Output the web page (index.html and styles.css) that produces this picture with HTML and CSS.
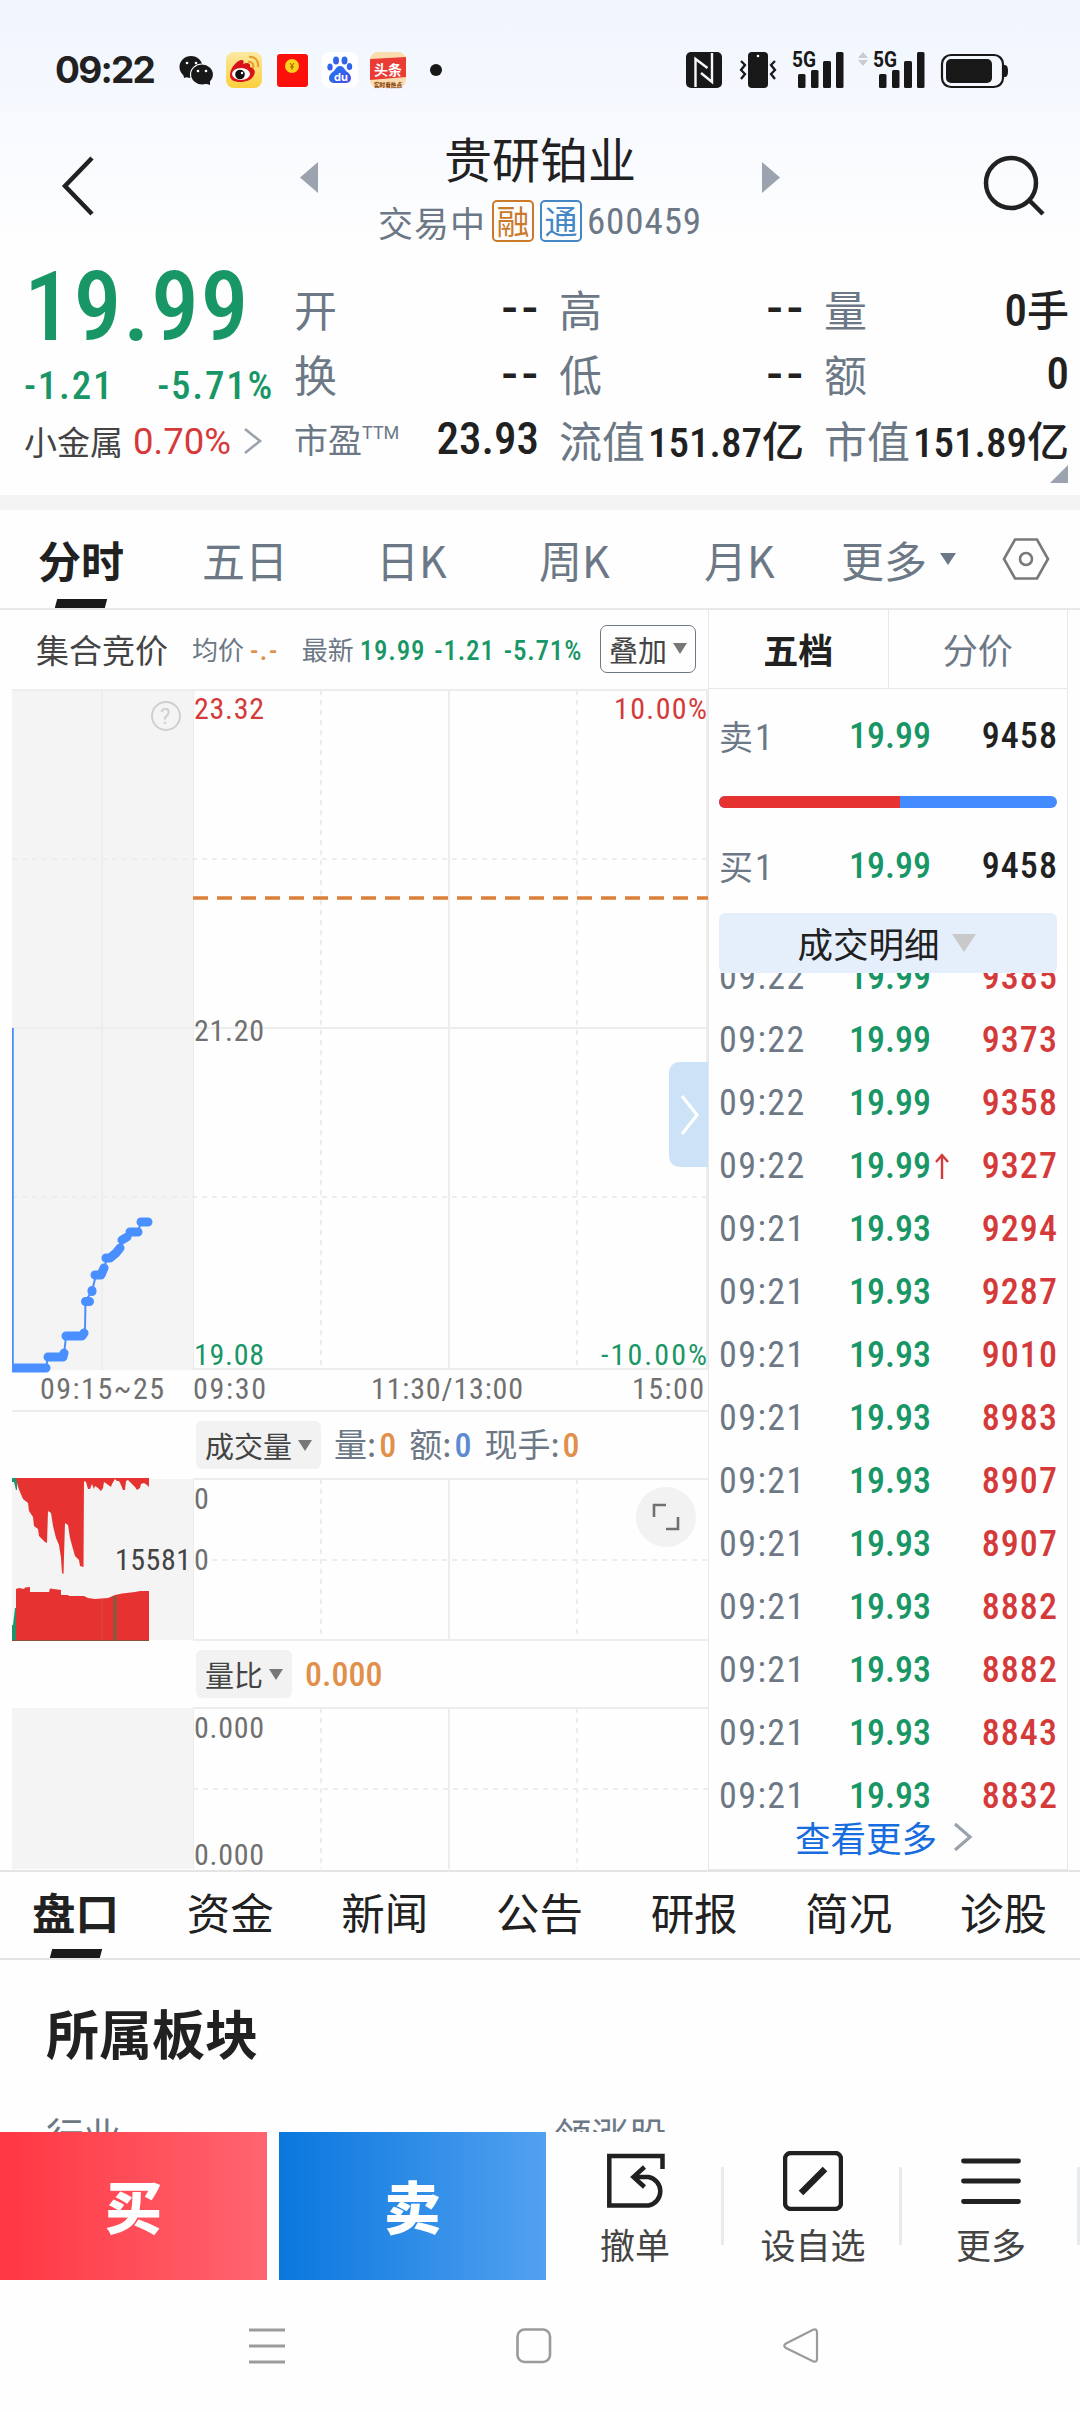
FILE: index.html
```html
<!DOCTYPE html>
<html lang="zh-CN">
<head>
<meta charset="utf-8">
<title>贵研铂业 600459</title>
<link rel="stylesheet" href="styles.css">
</head>
<body>
<div class="app">
  <header class="top">
    <div class="status">
      <span class="clock">09:22</span>
      <svg class="status-apps" width="270" height="44" viewBox="176 49 270 44">
        <ellipse cx="191" cy="68" rx="11.500" ry="11" fill="#181818"/><path d="M183 74l1 5 6-2z" fill="#181818"/>
        <ellipse cx="202" cy="75.500" rx="11.500" ry="10.500" fill="#181818" stroke="#f4f8fe" stroke-width="1.200"/><path d="M210 81l0 5-6-2z" fill="#181818"/>
        <circle cx="187" cy="64" r="1.300" fill="#fff"/><circle cx="196" cy="64" r="1.300" fill="#fff"/><circle cx="198" cy="72" r="1.300" fill="#fff"/><circle cx="206" cy="72" r="1.300" fill="#fff"/>
        <defs><linearGradient id="wb" x1="0" y1="0" x2="0" y2="1"><stop offset="0" stop-color="#fbe9a3"/><stop offset="1" stop-color="#fbcf3c"/></linearGradient>
        <linearGradient id="bd" x1="0" y1="0" x2="1" y2="1"><stop offset="0" stop-color="#1a7cf0"/><stop offset="1" stop-color="#4a4be8"/></linearGradient></defs>
        <rect x="226" y="53" width="36" height="36" rx="8" fill="url(#wb)"/>
        <path d="M230 76c0-7 7-15 12-15 2 0 2 2 1 4 4-2 8-1 7 3 4 1 6 4 4 8-2 5-8 7-14 7s-10-2-10-7z" fill="#d7141a"/>
        <ellipse cx="241" cy="75" rx="9" ry="6" fill="#fff"/><circle cx="240" cy="75.500" r="4.800" fill="#111"/><circle cx="242" cy="74" r="1.200" fill="#fff"/>
        <path d="M248 63c4-1 6 2 5 6M249 58c6-1 10 4 9 10" fill="none" stroke="#e8a02a" stroke-width="2.200"/>
        <rect x="275" y="53" width="34" height="36" rx="8" fill="#fff"/><rect x="277" y="55" width="31" height="33" rx="3" fill="#fb100c"/><circle cx="292" cy="67" r="7" fill="#fbd21c"/><path d="M290 64l2 3 2-3M292 67v4M290 68h4" stroke="#9a5a08" fill="none"/>
        <rect x="322" y="53" width="36" height="36" rx="8" fill="#fff"/>
        <g fill="url(#bd)"><ellipse cx="336" cy="61.500" rx="3" ry="4"/><ellipse cx="344.500" cy="61.500" rx="3" ry="4"/><ellipse cx="330" cy="68" rx="2.700" ry="3.600"/><ellipse cx="349.500" cy="67.500" rx="2.700" ry="3.600"/><path d="M340 67c3 0 4 2 6 5 3 2 5 4 5 7 0 4-3 5-6 5h-10c-4 0-6-2-6-5s2-5 5-7c2-3 3-5 6-5z"/></g>
        <text x="334" y="82" font-family="Inter, sans-serif" font-weight="700" font-size="11" fill="#fff">du</text>
        <rect x="370" y="53" width="36" height="36" rx="8" fill="#fbdcae"/><path d="M370 60l36-2v20l-36 3z" fill="#ea3c35"/>
        <text x="374" y="76" font-family="Noto Sans CJK SC, sans-serif" font-weight="700" font-size="14" fill="#fff">头条</text>
        <text x="374" y="88" font-family="Noto Sans CJK SC, sans-serif" font-weight="900" font-size="5.600" fill="#8c4a18">实时看热点</text>
        <circle cx="436" cy="71" r="6" fill="#181818"/>
      </svg>
      <svg class="status-sys" width="326" height="44" viewBox="684 48 326 44" fill="#181818">
        <rect x="686" y="52" width="36" height="36" rx="5"/><path d="M695.500 87V59l12 9M712 53v29l-11-9" fill="none" stroke="#f4f8fe" stroke-width="2.400"/>
        <rect x="748" y="52" width="20" height="36" rx="4"/><circle cx="758" cy="56" r="1.300" fill="#fff"/>
        <path d="M741 61l4 4-4 5 4 4-4 5M775 61l-4 4 4 5-4 4 4 5" fill="none" stroke="#181818" stroke-width="2.300"/>
        <text x="792" y="67" textLength="24" lengthAdjust="spacingAndGlyphs" font-family="Roboto, sans-serif" font-weight="700" font-size="22">5G</text>
        <rect x="798" y="74" width="7.500" height="14" rx="1.500"/><rect x="811" y="70" width="7.500" height="18" rx="1.500"/><rect x="823" y="61" width="8" height="27" rx="1.500"/><rect x="836" y="52" width="7.500" height="36" rx="1.500"/>
        <path d="M858 58l5-6 5 6zM858 60l5 6 5-6z" fill="#c9ccd2"/>
        <text x="873" y="67" textLength="24" lengthAdjust="spacingAndGlyphs" font-family="Roboto, sans-serif" font-weight="700" font-size="22">5G</text>
        <rect x="879" y="74" width="7.500" height="14" rx="1.500"/><rect x="892" y="70" width="7.500" height="18" rx="1.500"/><rect x="904" y="61" width="8" height="27" rx="1.500"/><rect x="917" y="52" width="7.500" height="36" rx="1.500"/>
        <rect x="942" y="55" width="61" height="32" rx="9" fill="none" stroke="#181818" stroke-width="2.200"/><rect x="946" y="59" width="46" height="24" rx="5"/><path d="M1003 65h2q3 0 3 6t-3 6h-2z"/>
      </svg>
    </div>
    <div class="titlebar">
      <svg width="34" height="60" viewBox="0 0 34 60"><path d="M32 2L5 30l27 28" fill="none" stroke="#212121" stroke-width="4.500"/></svg>
      <svg class="prev" width="18" height="31" viewBox="0 0 18 31"><path d="M18 0v31L0 15.500z" fill="#9ba3ae"/></svg>
      <div class="titles">
        <h1 class="name">贵研铂业</h1>
        <div class="sub"><span>交易中</span><span class="tag tag-orange">融</span><span class="tag tag-blue">通</span><span class="num code">600459</span></div>
      </div>
      <svg class="next" width="18" height="31" viewBox="0 0 18 31"><path d="M0 0v31l18-15.500z" fill="#9ba3ae"/></svg>
      <svg class="search" width="64" height="64" viewBox="0 0 64 64"><g fill="none" stroke="#212121" stroke-width="4.500"><circle cx="29" cy="30" r="25"/><path d="M47 47l14 14"/></g></svg>
    </div>
  </header>

  <section class="quote">
    <div class="last">
      <div class="price num green">19.99</div>
      <div class="change num green"><span>-1.21</span><span>-5.71%</span></div>
      <div class="sector"><span>小金属</span><span class="red pct">0.70%</span><svg width="20" height="28" viewBox="0 0 20 28"><path d="M2 2l15 12L2 26" fill="none" stroke="#9aa2ac" stroke-width="2.600"/></svg></div>
    </div>
    <div class="stats">
      <div class="stat"><span class="lab">开</span><b class="dash">--</b></div>
      <div class="stat"><span class="lab">高</span><b class="dash">--</b></div>
      <div class="stat"><span class="lab">量</span><b class="num">0<i>手</i></b></div>
      <div class="stat"><span class="lab">换</span><b class="dash">--</b></div>
      <div class="stat"><span class="lab">低</span><b class="dash">--</b></div>
      <div class="stat"><span class="lab">额</span><b class="num">0</b></div>
      <div class="stat"><span class="lab small">市盈<sup>TTM</sup></span><b class="num">23.93</b></div>
      <div class="stat"><span class="lab">流值</span><b class="num fit">151.87<i>亿</i></b></div>
      <div class="stat"><span class="lab">市值</span><b class="num fit">151.89<i>亿</i></b></div>
    </div>
    <svg class="corner" width="18" height="18" viewBox="0 0 18 18"><path d="M18 0v18H0z" fill="#9ba3ae"/></svg>
  </section>

  <nav class="periods">
    <span class="period active">分时</span><span class="period">五日</span><span class="period">日K</span><span class="period">周K</span><span class="period">月K</span>
    <span class="period more">更多<svg width="16" height="12" viewBox="0 0 16 12"><path d="M0 0h16L8 12z" fill="#6c7885"/></svg></span>
    <svg width="48" height="42" viewBox="0 0 48 42"><g fill="none" stroke="#77797c" stroke-width="2.600"><path d="M2 21L13 1.500h22L46 21 35 40.500H13z"/><circle cx="24" cy="21" r="6"/></g></svg>
  </nav>

  <main class="market">
    <div class="charts">
      <div class="legend">
        <span class="call">集合竞价</span>
        <span class="avg">均价<b class="num orange">-.-</b></span>
        <span class="now">最新<b class="num green">19.99</b><b class="num green">-1.21</b><b class="num green">-5.71%</b></span>
        <span class="chip outline">叠加<svg width="14" height="11" viewBox="0 0 14 11"><path d="M0 0h14L7 11z" fill="#777"/></svg></span>
      </div>
      <svg class="plot" width="697" height="723" viewBox="12 689 697 723">
        <rect x="12" y="690" width="181" height="680" fill="#f4f4f4"/>
        <g stroke="#ededee" stroke-width="2" fill="none">
          <path d="M12 690h696M12 1028h696M193 1369h515M102 690v680M449 690v680M707 690v680M12 1411h696"/>
          <path d="M193.500 690v680" stroke-width="1"/>
          <path d="M321 690v680M577 690v680" stroke-dasharray="5 5"/>
          <path d="M12 859h696M12 1197h696" stroke-dasharray="5 5"/>
        </g>
        <path d="M193 898h515" stroke="#dc7f38" stroke-width="3.500" stroke-dasharray="15 9"/>
        <circle cx="166" cy="716" r="14" fill="none" stroke="#cfcfcf" stroke-width="2"/>
        <text class="q" x="160" y="724">?</text>
        <path d="M12.800 1028V1368H46L48 1357L64 1355L66 1336H82L85 1330L85.500 1301L92 1291L96 1275L101 1273L108 1258L120 1247L124 1239L131 1232L138 1230L142 1222H148" fill="none" stroke="#4a8fff" stroke-width="2"/>
        <path d="M12 1368H46M48 1357H63L64 1353M66 1336H82L84 1333M85.500 1301.500H89.500M92 1291.500V1290.500M95 1275H101L104 1268M106 1258H110L116 1253L120 1248M122 1240L127 1237M130 1232H138M141 1222H148" fill="none" stroke="#4a8fff" stroke-width="9" stroke-linecap="round" stroke-linejoin="round"/>
        <g class="axis">
          <text class="up" x="194" y="719" textLength="70">23.32</text><text class="up" x="614" y="719" textLength="93">10.00%</text>
          <text x="194" y="1041" textLength="70">21.20</text>
          <text class="down" x="194" y="1365" textLength="70">19.08</text><text class="down" x="601" y="1365" textLength="106">-10.00%</text>
          <text x="40" y="1399" textLength="124">09:15~25</text><text x="193" y="1399" textLength="73">09:30</text><text x="371" y="1399" textLength="152">11:30/13:00</text><text x="632" y="1399" textLength="72">15:00</text>
        </g>
        <path d="M708 1062h-27q-12 0-12 12v81q0 12 12 12h27z" fill="#cce2f7"/><path d="M682 1096l15 19-15 19" fill="none" stroke="#fff" stroke-width="3.200"/>
      </svg>
      <div class="indicator">
        <span class="chip">成交量<svg width="14" height="11" viewBox="0 0 14 11"><path d="M0 0h14L7 11z" fill="#777"/></svg></span>
        <span class="ind">量:<b class="num orange">0</b></span><span class="ind">额:<b class="num blue">0</b></span><span class="ind">现手:<b class="num orange">0</b></span>
      </div>
      <svg class="plot" width="697" height="163" viewBox="12 1478 697 163">
        <rect x="12" y="1479" width="181" height="161" fill="#f4f4f4"/>
        <g stroke="#ededee" stroke-width="2" fill="none"><path d="M193 1479h515M193 1640h515M449 1479v161"/><path d="M193.500 1479v161" stroke-width="1"/><path d="M321 1479v161M577 1479v161M212 1560h496" stroke-dasharray="5 5"/></g>
        <path d="M12 1478h5v12h-1l-2-8h-2z" fill="#1f9468"/>
        <path d="M16 1478H149V1487L147 1485 144 1483 141 1484 140 1488 137 1490 135 1487 131 1483 128 1480 126 1481 125 1490 123 1490 121 1485 119 1481 117 1481 115 1479 112 1484 111 1487 107 1484 104 1482 103 1488 101 1491 98 1488 95 1486 94 1489 92 1484 90 1489 88 1489 86 1482 84 1481 83.500 1567 80 1566 79 1560 75 1556 73 1549 70 1538 68 1525 65 1523 63.500 1574 62 1573 61 1558 59 1545 56 1538 53 1526 51 1513 48 1511 47 1543 45 1542 39 1536 38 1529 34 1526 33 1517 29 1511 28 1503 23 1499 20 1492 18 1487z" fill="#e63331"/>
        <path d="M12 1640v-15h1l2-17h1.500v32z" fill="#1f9468"/>
        <path d="M16 1640V1589L19 1588 24 1589 25 1587.500 30 1587V1592H49L50 1588.500 61 1590V1595H68L69 1596H84L88 1598 95 1599 108 1598 115 1595 122 1593.500 135 1592 140 1591H149V1640z" fill="#e63331"/>
        <path d="M115 1596v45" stroke="#8a5a3c" stroke-width="3.500"/><path d="M102 1599v41" stroke="#d84a44" stroke-width="1"/><path d="M12 1640.500h137" stroke="#8a5040" stroke-width="1"/>
        <g class="axis"><text x="194" y="1509">0</text><text x="194" y="1570">0</text><text class="dark" x="115" y="1570" textLength="76">15581</text></g>
        <circle cx="666" cy="1517" r="30" fill="#f2f2f2"/><path d="M654 1517v-12h12M678 1517v12h-12" fill="none" stroke="#707070" stroke-width="2.600"/>
      </svg>
      <div class="indicator second">
        <span class="chip">量比<svg width="14" height="11" viewBox="0 0 14 11"><path d="M0 0h14L7 11z" fill="#777"/></svg></span>
        <b class="num orange ratio">0.000</b>
      </div>
      <svg class="plot" width="697" height="163" viewBox="12 1707 697 163">
        <rect x="12" y="1708" width="181" height="161" fill="#f4f4f4"/>
        <g stroke="#ededee" stroke-width="2" fill="none"><path d="M193 1708h515M449 1708v161"/><path d="M193.500 1708v161" stroke-width="1"/><path d="M321 1708v161M577 1708v161M193 1789h515" stroke-dasharray="5 5"/></g>
        <g class="axis"><text x="194" y="1738" textLength="70">0.000</text><text x="194" y="1865" textLength="70">0.000</text></g>
      </svg>
    </div>

    <aside class="book">
      <div class="book-tabs"><span class="book-tab on">五档</span><span class="book-tab">分价</span></div>
      <div class="level"><span>卖<em class="num">1</em></span><b class="num green">19.99</b><b class="num vol">9458</b></div>
      <div class="ratio-bar"><div class="buy"></div></div>
      <div class="level"><span>买<em class="num">1</em></span><b class="num green">19.99</b><b class="num vol">9458</b></div>
      <div class="detail">成交明细<svg width="24" height="18" viewBox="0 0 24 18"><path d="M0 0h24L12 18z" fill="#c9c9c9"/></svg></div>
      <div class="ticks">
        <div class="tick num"><span>09:22</span><b class="green">19.99</b><b class="vol red">9385</b></div>
        <div class="tick num"><span>09:22</span><b class="green">19.99</b><b class="vol red">9373</b></div>
        <div class="tick num"><span>09:22</span><b class="green">19.99</b><b class="vol red">9358</b></div>
        <div class="tick num"><span>09:22</span><b class="green">19.99<svg width="16" height="26" viewBox="0 0 16 26"><path d="M8 26V2M2 9l6-7 6 7" fill="none" stroke="#d53a3a" stroke-width="2.400"/></svg></b><b class="vol red">9327</b></div>
        <div class="tick num"><span>09:21</span><b class="green">19.93</b><b class="vol red">9294</b></div>
        <div class="tick num"><span>09:21</span><b class="green">19.93</b><b class="vol red">9287</b></div>
        <div class="tick num"><span>09:21</span><b class="green">19.93</b><b class="vol red">9010</b></div>
        <div class="tick num"><span>09:21</span><b class="green">19.93</b><b class="vol red">8983</b></div>
        <div class="tick num"><span>09:21</span><b class="green">19.93</b><b class="vol red">8907</b></div>
        <div class="tick num"><span>09:21</span><b class="green">19.93</b><b class="vol red">8907</b></div>
        <div class="tick num"><span>09:21</span><b class="green">19.93</b><b class="vol red">8882</b></div>
        <div class="tick num"><span>09:21</span><b class="green">19.93</b><b class="vol red">8882</b></div>
        <div class="tick num"><span>09:21</span><b class="green">19.93</b><b class="vol red">8843</b></div>
        <div class="tick num"><span>09:21</span><b class="green">19.93</b><b class="vol red">8832</b></div>
      </div>
      <div class="see-more">查看更多<svg width="20" height="30" viewBox="0 0 20 30"><path d="M2 2l15 13L2 28" fill="none" stroke="#9aa2ac" stroke-width="3.200"/></svg></div>
    </aside>
  </main>

  <nav class="sections">
    <span class="section active">盘口</span><span class="section">资金</span><span class="section">新闻</span><span class="section">公告</span><span class="section">研报</span><span class="section">简况</span><span class="section">诊股</span>
  </nav>

  <section class="boards">
    <h2>所属板块</h2>
    <div class="cols"><span>行业</span><span>领涨股</span></div>
  </section>

  <footer class="actions">
    <div class="trade buy-btn">买</div>
    <div class="trade sell-btn">卖</div>
    <div class="act"><svg width="60" height="60" viewBox="-1.500 0 60 60"><g fill="none" stroke="#212121" stroke-width="4.500"><path d="M56 18V5H2.800V54.500H42A14.500 14.500 0 0 0 42 26H27"/><path d="M38 16L27 26l11 10"/></g></svg>撤单</div>
    <div class="act"><svg width="60" height="60" viewBox="0 0 60 60"><rect x="2" y="2" width="56" height="56" rx="6" fill="none" stroke="#212121" stroke-width="4.500"/><path d="M18 42L42 18" stroke="#212121" stroke-width="6.500"/></svg>设自选</div>
    <div class="act"><svg width="60" height="60" viewBox="0 0 60 60"><path d="M2.500 10h55M2.500 30h55M2.500 50.500h55" stroke="#212121" stroke-width="4.800" stroke-linecap="round"/></svg>更多</div>
  </footer>

  <div class="sysnav">
    <svg width="36" height="36" viewBox="0 0 36 36"><path d="M0 2h36M0 18h36M0 34h36" stroke="#9b9b9b" stroke-width="3"/></svg>
    <svg width="36" height="36" viewBox="0 0 36 36"><rect x="1.500" y="1.500" width="32.500" height="32.500" rx="7" fill="none" stroke="#9b9b9b" stroke-width="2.600"/></svg>
    <svg width="36" height="36" viewBox="0 0 36 36"><path d="M3 15.500L30 1.800q4-1.500 4 2.700v26q0 4.500-4 2.700L3 20q-3.500-2.200 0-4.500z" fill="none" stroke="#9b9b9b" stroke-width="2.200"/></svg>
  </div>
</div>
</body>
</html>
```
FILE: styles.css
```css
* { box-sizing: border-box; }
body { margin: 0; background: #fdfdfd; font-family: "Noto Sans CJK SC", sans-serif; color: #212121; }
.app { width: 1080px; height: 2412px; overflow: hidden; background: #fefefe; display: flex; flex-direction: column; }
.app > * { flex: none; }
svg { display: block; flex: none; }
.num { font-family: Roboto, "Noto Sans CJK SC", sans-serif; font-stretch: 85%; }
b { font-weight: 500; }
i, em { font-style: normal; }
.green { color: #199666; }
.red { color: #d53a3a; }
.orange { color: #e0904a; }
.blue { color: #5b8bd0; }

.top { height: 250px; background: linear-gradient(#f0f5fe, #fefefe); display: flex; flex-direction: column; }
.status { height: 128px; display: flex; align-items: flex-start; padding: 48px 70px 0 55px; }
.clock { width: 121px; font: 650 37px/43px Inter, sans-serif; letter-spacing: -1.8px; }
.status-sys { margin-left: auto; }
.titlebar { height: 122px; display: flex; align-items: flex-start; padding-left: 60px; }
.titlebar > svg:first-child { margin-top: 28px; }
.prev { margin: 34px 0 0 206px; }
.titles { width: 444px; display: flex; flex-direction: column; align-items: center; }
.name { margin: -3px 0 0; font-size: 48px; line-height: 64px; font-weight: 400; }
.sub { display: flex; align-items: center; height: 58px; margin-top: 3px; font-size: 35px; color: #6c7885; letter-spacing: 1px; }
.tag { width: 42px; height: 42px; margin-left: 6px; border: 2px solid; border-radius: 5px; font-size: 33px; line-height: 36px; text-align: center; letter-spacing: 0; }
.tag-orange { color: #cb7a2c; }
.tag-blue { color: #4487c4; }
.code { margin-left: 5px; font-size: 37px; letter-spacing: 0.025em; }
.next { margin-top: 34px; }
.search { margin: 25px 0 0 202px; }

.quote { position: relative; height: 260px; border-bottom: 15px solid #f4f4f4; display: flex; padding: 0 10px 0 24px; }
.last { width: 270px; }
.price { height: 112px; font-size: 96px; line-height: 114px; font-weight: 500; letter-spacing: 0.015em; }
.change { display: flex; justify-content: space-between; width: 250px; font-size: 39px; line-height: 48px; font-weight: 500; letter-spacing: 0.045em; }
.sector { display: flex; align-items: center; height: 56px; margin-top: 3px; font-size: 33px; color: #444; }
.pct { margin-left: 10px; font: 36.5px Roboto, sans-serif; width: 98px; }
.sector svg { margin-left: 12px; }
.stats { flex: 1; display: grid; grid-template-columns: 245px 245px 245px; column-gap: 20px; grid-template-rows: repeat(3, 65.5px); padding-top: 25px; }
.stat { display: flex; align-items: center; justify-content: space-between; white-space: nowrap; }
.stat b { font-size: 45px; }
.stat .fit { font-size: 41px; font-stretch: 75%; }
.stat i { font-size: 42px; }
.stat .dash { font-family: Roboto, sans-serif; font-size: 48px; letter-spacing: 4px; margin-right: -3px; }
.lab { font-size: 43px; color: #6c7885; }
.lab.small { font-size: 34px; }
.lab sup { font-size: 18px; line-height: 0; vertical-align: 14px; font-family: Roboto, sans-serif; }
.corner { position: absolute; right: 12px; bottom: 12px; }

.periods { height: 100px; border-bottom: 2px solid #e8e8e8; display: grid; grid-template-columns: 164px 174px 163px 165px 137px 161px auto; align-items: center; padding-left: 38px; font-size: 43px; color: #6c7885; }
.period { line-height: 98px; height: 98px; justify-self: start; }
.more { display: flex; align-items: center; gap: 13px; }
.active { position: relative; font-weight: 700; color: #212121; }
.active::after { content: ""; position: absolute; left: 50%; bottom: 0; width: 50px; height: 9px; margin-left: -25px; background: #1a1a1a; transform: skewX(-15deg); }

.market { display: flex; height: 1260px; padding-left: 12px; }
.charts { width: 696px; display: flex; flex-direction: column; }
.legend { height: 77px; margin-bottom: 2px; display: flex; align-items: center; padding: 0 12px 0 24px; font-size: 26px; color: #6c7885; white-space: nowrap; }
.legend .call { font-size: 33px; color: #444; }
.legend .avg { margin-left: 24px; }
.legend .avg b { letter-spacing: 1.5px; }
.legend .now { margin-left: 23px; }
.legend b { font-size: 27px; margin-left: 6px; letter-spacing: 0.03em; }
.legend .now b + b { margin-left: 9px; }
.chip { display: inline-flex; align-items: center; gap: 6px; height: 48px; padding: 0 9px; background: #f2f2f2; border-radius: 6px; font-size: 29px; color: #444; white-space: nowrap; }
.chip.outline { background: none; border: 1.5px solid #6c7885; border-radius: 7px; margin-left: auto; padding: 0 8px; }
.axis text { font: 400 30px Roboto, sans-serif; fill: #707070; font-stretch: 78%; }
.axis .up { fill: #d53a3a; }
.axis .down { fill: #199666; }
.axis .dark { fill: #444; }
.q { font: 22px Roboto, sans-serif; fill: #cfcfcf; }
.indicator { height: 66px; padding-left: 184px; display: flex; align-items: center; gap: 13px; font-size: 33px; line-height: 46px; color: #6c7885; }
.ind { margin-top: -3px; }
.ind b { font-size: 34px; margin-left: 3px; }
.ratio { font-size: 34px; }

.book { width: 360px; border: solid #e8e8e8; border-width: 0 1px 1px; display: flex; flex-direction: column; }
.book-tabs { display: flex; height: 79px; border-bottom: 1px solid #e8e8e8; }
.book-tab { flex: 1; text-align: center; font-size: 35px; line-height: 78px; color: #6c7885; }
.book-tab.on { font-weight: 700; color: #212121; border-right: 1px solid #e8e8e8; }
.level, .tick { display: grid; grid-template-columns: 130px 1fr auto; align-items: center; padding: 0 10px; font-size: 36px; color: #6c7885; }
.level { height: 94px; }
.level span { font-size: 34px; margin-top: -2px; }
.level em { font-size: 36px; margin-left: 2px; }
.tick span { letter-spacing: 0.04em; }
.level .vol { color: #212121; }
.level .vol, .tick .vol { letter-spacing: 0.03em; margin-right: -1px; }
.ratio-bar { height: 12px; margin: 13px 10px 11px; border-radius: 6px; background: #448bff; overflow: hidden; }
.buy { width: 53.5%; height: 12px; background: #e63331; }
.detail { height: 60px; margin: 0 10px; padding: 0 3px 1px 0; border-radius: 6px; background: #e5effc; display: flex; align-items: center; justify-content: center; gap: 12px; font-size: 35.5px; }
.ticks { height: 835px; overflow: hidden; }
.tick { height: 63px; }
.tick:first-child { margin-top: -28px; }
.tick b { display: flex; align-items: center; }
.tick b svg { margin-left: 3px; }
.see-more { flex: 1; display: flex; align-items: center; justify-content: center; gap: 16px; padding: 0 8px 4px 0; font-size: 35.5px; color: #176ce0; }

.sections { height: 90px; border: solid #e4e4e4; border-width: 2px 0; display: flex; justify-content: space-between; padding: 0 33px 0 32px; font-size: 43.5px; }
.section { line-height: 79px; height: 86px; }
.boards { height: 172px; overflow: hidden; padding: 0 46px; }
.boards h2 { margin: 34px 0 0; font-size: 53px; line-height: 76px; font-weight: 700; }
.cols { display: grid; grid-template-columns: 508px 1fr; margin-top: 39px; font-size: 37.5px; line-height: 50px; color: #6c7885; }
.actions { height: 148px; display: flex; }
.trade { width: 267px; margin-right: 12px; color: #fff; font-size: 57px; font-weight: 900; line-height: 145px; text-align: center; }
.buy-btn { background: linear-gradient(90deg, #ff3742, #ff6570); }
.sell-btn { margin-right: 0; background: linear-gradient(90deg, #0977de, #52a1f0); }
.act { position: relative; width: 178px; display: flex; flex-direction: column; align-items: center; padding-top: 19px; font-size: 35px; line-height: 65px; color: #444; }
.act::after { content: ""; position: absolute; right: 0; top: 35px; width: 3px; height: 78px; background: #e9eaec; }
.sysnav { height: 132px; display: flex; justify-content: center; gap: 231px; padding: 48px 13px 0 0; }
```
